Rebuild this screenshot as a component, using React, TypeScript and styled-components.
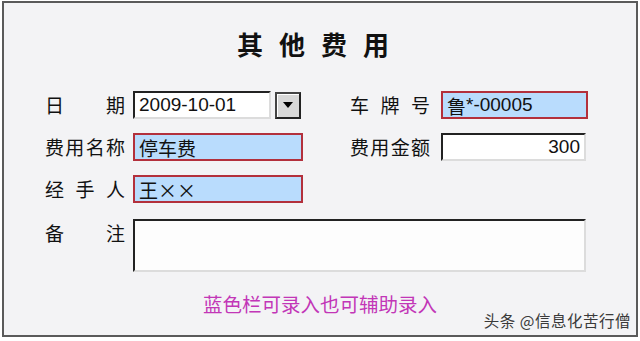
import styled, { createGlobalStyle } from "styled-components";

const Global = createGlobalStyle`
  body {
    margin: 0;
    background: #ffffff;
    font-family: "Noto Sans CJK SC", "Liberation Sans", sans-serif;
  }
`;

const Frame = styled.div`
  position: relative;
  box-sizing: border-box;
  width: 636px;
  height: 336px;
  margin: 1px 0 0 2px;
  border: 2px solid #5a5a5a;
  background: #f3f3f5;
  padding: 0 0 0 41px;
`;

const Title = styled.h1`
  margin: 0 0 0 -41px;
  padding: 24px 0 0 2px;
  height: 62px;
  box-sizing: border-box;
  font-size: 26px;
  line-height: 34px;
  font-weight: 700;
  letter-spacing: 16px;
  text-align: center;
  color: #111;
`;

const Form = styled.div`
  display: flex;
  flex-direction: column;
  gap: 14px;
  margin-top: 26px;
`;

const Row = styled.div`
  display: flex;
  align-items: center;
  height: 28px;
`;

const Pair = styled.div<{ $w: number; $gap?: number }>`
  display: flex;
  align-items: center;
  width: ${(p) => p.$w}px;
  gap: ${(p) => p.$gap ?? 8}px;
`;

const Label = styled.div`
  display: flex;
  justify-content: space-between;
  width: 80px;
  font-size: 19px;
  line-height: 28px;
  color: #111;
  flex-shrink: 0;
`;

const Input = styled.div<{ $blue?: boolean; $w: number; $right?: boolean }>`
  box-sizing: border-box;
  width: ${(p) => p.$w}px;
  height: 28px;
  padding: 0 4px;
  display: flex;
  align-items: center;
  justify-content: ${(p) => (p.$right ? "flex-end" : "flex-start")};
  font-size: 19px;
  color: #111;
  background: ${(p) => (p.$blue ? "#b9dcfd" : "#ffffff")};
  border: 2px solid;
  border-color: ${(p) =>
    p.$blue ? "#b3303c" : "#222 #dcdcdc #dcdcdc #222"};
  white-space: nowrap;
`;

const Latin = styled.span`
  font-family: "Liberation Sans", sans-serif;
`;

const DropButton = styled.div`
  box-sizing: border-box;
  width: 26px;
  height: 27px;
  margin-left: -4px;
  border: 2px solid;
  border-color: #444 #222 #222 #444;
  background: #d8d8d8;
  box-shadow: inset 1px 1px 0 #ffffff;
  display: flex;
  align-items: center;
  justify-content: center;
`;

const Note = styled.div`
  display: flex;
  align-items: flex-start;
  gap: 8px;
  margin-top: 2px;
`;

const NoteBox = styled.div`
  box-sizing: border-box;
  width: 453px;
  height: 53px;
  background: #fdfdfd;
  border: 2px solid;
  border-color: #222 #dcdcdc #dcdcdc #222;
`;

const Hint = styled.div`
  margin: 18px 0 0 -41px;
  text-align: center;
  font-size: 19.5px;
  line-height: 28px;
  color: #c236b7;
`;

const Watermark = styled.div`
  position: absolute;
  right: 5px;
  bottom: 4px;
  font-size: 15.5px;
  color: #3a3a3a;
  letter-spacing: 0.5px;
`;

const spread = (s: string) => s.split("").map((c, i) => <span key={i}>{c}</span>);

export default function App() {
  return (
    <>
      <Global />
      <Frame>
        <Title>其他费用</Title>
        <Form>
          <Row>
            <Pair $w={305}>
              <Label>{spread("日期")}</Label>
              <Input $w={138}>
                <Latin>2009-10-01</Latin>
              </Input>
              <DropButton>
                <svg width="10" height="6" viewBox="0 0 10 6">
                  <path d="M0 0h10L5 6z" fill="#000" />
                </svg>
              </DropButton>
            </Pair>
            <Pair $w={260} $gap={11}>
              <Label>{spread("车牌号")}</Label>
              <Input $blue $w={147}>
                鲁<Latin>*-00005</Latin>
              </Input>
            </Pair>
          </Row>
          <Row>
            <Pair $w={305}>
              <Label>{spread("费用名称")}</Label>
              <Input $blue $w={170}>
                停车费
              </Input>
            </Pair>
            <Pair $w={260} $gap={11}>
              <Label>{spread("费用金额")}</Label>
              <Input $w={145} $right>
                <Latin>300</Latin>
              </Input>
            </Pair>
          </Row>
          <Row>
            <Pair $w={305}>
              <Label>{spread("经手人")}</Label>
              <Input $blue $w={170}>
                王××
              </Input>
            </Pair>
          </Row>
          <Note>
            <Label>{spread("备注")}</Label>
            <NoteBox />
          </Note>
        </Form>
        <Hint>蓝色栏可录入也可辅助录入</Hint>
        <Watermark>头条 @信息化苦行僧</Watermark>
      </Frame>
    </>
  );
}
